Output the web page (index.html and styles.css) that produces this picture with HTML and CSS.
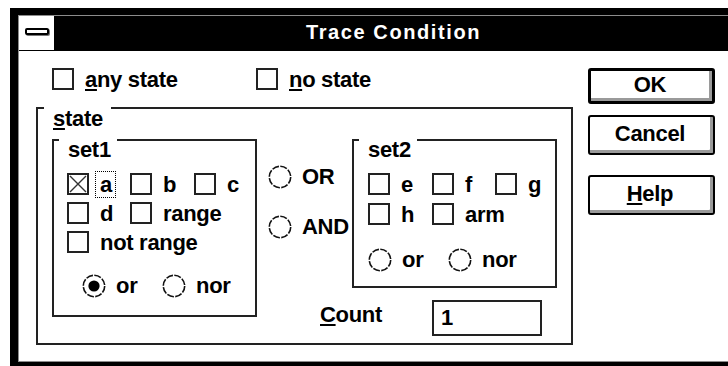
FILE: index.html
```html
<!DOCTYPE html>
<html lang="en">

<head>
    <meta charset="UTF-8">
    <meta name="viewport" content="width=device-width, initial-scale=1.0">
    <title>Trace Condition</title>
    <link rel="stylesheet" href="styles.css">
</head>

<body>
    <div class="window">
        <div class="frame">
            <div class="titlebar">
                <div class="sysmenu"><div class="sysmenu-bar"></div></div>
                <div class="title">Trace Condition</div>
            </div>

            <div class="content">
                <div class="main">
                    <div class="top-row">
                        <div class="check any"><span class="box"></span><span class="text"><u>a</u>ny state</span></div>
                        <div class="check"><span class="box"></span><span class="text"><u>n</u>o state</span></div>
                    </div>

                    <div class="group state">
                        <span class="group-label"><u>s</u>tate</span>
                        <div class="state-body">
                            <!-- set1 -->
                            <div class="group set1">
                                <span class="group-label">set1</span>
                                <div class="checks">
                                    <div class="check">
                                        <span class="box checked">
                                            <svg width="18" height="18" viewBox="0 0 18 18">
                                                <path d="M1 1 L17 17 M17 1 L1 17" stroke="#333" stroke-width="1.4" fill="none" />
                                            </svg>
                                        </span>
                                        <span class="text focus">a</span>
                                    </div>
                                    <div class="check"><span class="box"></span><span class="text">b</span></div>
                                    <div class="check"><span class="box"></span><span class="text">c</span></div>
                                    <div class="check"><span class="box"></span><span class="text">d</span></div>
                                    <div class="check wide"><span class="box"></span><span class="text">range</span></div>
                                    <div class="check full"><span class="box"></span><span class="text">not range</span></div>
                                </div>
                                <div class="radios">
                                    <div class="radio">
                                        <svg width="24" height="24" viewBox="0 0 24 24">
                                            <circle cx="12" cy="12" r="10.7" fill="#fff" stroke="#111" stroke-width="1.6" stroke-dasharray="7 1.4" />
                                            <circle cx="12" cy="12" r="5.6" fill="#000" />
                                        </svg>
                                        <span class="text">or</span>
                                    </div>
                                    <div class="radio">
                                        <svg width="24" height="24" viewBox="0 0 24 24">
                                            <circle cx="12" cy="12" r="10.7" fill="#fff" stroke="#111" stroke-width="1.6" stroke-dasharray="7 1.4" />
                                        </svg>
                                        <span class="text">nor</span>
                                    </div>
                                </div>
                            </div>

                            <!-- OR / AND -->
                            <div class="middle">
                                <div class="radio">
                                    <svg width="24" height="24" viewBox="0 0 24 24">
                                        <circle cx="12" cy="12" r="10.7" fill="#fff" stroke="#111" stroke-width="1.6" stroke-dasharray="7 1.4" />
                                    </svg>
                                    <span class="text">OR</span>
                                </div>
                                <div class="radio and">
                                    <svg width="24" height="24" viewBox="0 0 24 24">
                                        <circle cx="12" cy="12" r="10.7" fill="#fff" stroke="#111" stroke-width="1.6" stroke-dasharray="7 1.4" />
                                    </svg>
                                    <span class="text">AND</span>
                                </div>
                            </div>

                            <!-- set2 -->
                            <div class="group set2">
                                <span class="group-label">set2</span>
                                <div class="checks">
                                    <div class="check"><span class="box"></span><span class="text">e</span></div>
                                    <div class="check"><span class="box"></span><span class="text">f</span></div>
                                    <div class="check"><span class="box"></span><span class="text">g</span></div>
                                    <div class="check"><span class="box"></span><span class="text">h</span></div>
                                    <div class="check wide"><span class="box"></span><span class="text">arm</span></div>
                                </div>
                                <div class="radios">
                                    <div class="radio">
                                        <svg width="24" height="24" viewBox="0 0 24 24">
                                            <circle cx="12" cy="12" r="10.7" fill="#fff" stroke="#111" stroke-width="1.6" stroke-dasharray="7 1.4" />
                                        </svg>
                                        <span class="text">or</span>
                                    </div>
                                    <div class="radio">
                                        <svg width="24" height="24" viewBox="0 0 24 24">
                                            <circle cx="12" cy="12" r="10.7" fill="#fff" stroke="#111" stroke-width="1.6" stroke-dasharray="7 1.4" />
                                        </svg>
                                        <span class="text">nor</span>
                                    </div>
                                </div>
                            </div>

                            <div class="count-row">
                                <span class="count-label"><u>C</u>ount</span>
                                <span class="field">1</span>
                            </div>
                        </div>
                    </div>
                </div>

                <div class="buttons">
                    <div class="btn default">OK</div>
                    <div class="btn cancel">Cancel</div>
                    <div class="btn help"><span><u>H</u>elp</span></div>
                </div>
            </div>
        </div>
    </div>
</body>

</html>
```

FILE: styles.css
```css
* {
    box-sizing: border-box;
}

body {
    margin: 0;
    background: #fff;
    overflow: hidden;
    font-family: "Liberation Sans", Arial, sans-serif;
    font-weight: bold;
    font-size: 22px;
    letter-spacing: -0.3px;
    line-height: 22px;
    color: #000;
}

u {
    text-decoration-thickness: 2px;
    text-underline-offset: 2px;
}

/* window frame */
.window {
    width: 731px;
    margin: 8px 0 0 10px;
    border: 7px solid #000;
    border-left-width: 8px;
}

.frame {
    border: 1px solid #8c8c8c;
}

.titlebar {
    display: flex;
    height: 35px;
    background: #000;
}

.sysmenu {
    width: 35px;
    height: 34px;
    background: #fff;
    padding: 12px 0 0 6px;
}

.sysmenu-bar {
    width: 24px;
    height: 7px;
    border: 2px solid #000;
    border-radius: 2px;
    background: #fff;
    box-shadow: 1px 1px 0 #777;
}

.title {
    flex: 1;
    color: #fff;
    text-align: center;
    font-size: 20px;
    letter-spacing: 1.6px;
    line-height: 32px;
}

.content {
    display: flex;
    height: 310px;
    padding: 17px 0 0 17px;
}

.main {
    width: 537px;
}

/* checkboxes and radios */
.check,
.radio {
    display: flex;
    align-items: flex-start;
}

.box {
    width: 22px;
    height: 22px;
    border: 2px solid #222;
    margin-right: 11px;
    flex-shrink: 0;
}

.box svg {
    display: block;
}

.check .text {
    padding-top: 1px;
}

.focus {
    outline: 1px dotted #000;
    outline-offset: 1px;
    margin-left: -3px;
    padding: 1px 2px 0 3px;
}

.radio svg {
    display: block;
    margin-right: 10px;
    flex-shrink: 0;
}

.radio .text {
    padding-top: 1px;
}

.top-row {
    display: flex;
    padding-left: 16px;
    height: 23px;
}

.top-row .any {
    width: 204px;
}

/* group boxes */
.group {
    position: relative;
    border: 2px solid #222;
}

.group-label {
    position: absolute;
    top: -4px;
    left: 6px;
    background: #fff;
    padding: 3px 8px 0 9px;
}

.state {
    margin-top: 16px;
    height: 238px;
}

.state-body {
    display: grid;
    grid-template-columns: 205px 95px 205px;
    grid-template-rows: 149px auto;
    padding: 30px 0 0 14px;
}

.set1 {
    grid-row: 1 / 3;
    height: 178px;
    padding: 32px 0 0 13px;
}

.set1 .group-label,
.set2 .group-label {
    left: 5px;
    padding: 2px 6px 0 9px;
}

.checks {
    display: grid;
    grid-template-columns: 63px 64px auto;
    grid-auto-rows: 22px;
    row-gap: 7px;
}

.checks .full {
    grid-column: 1 / 4;
}

.radios {
    display: flex;
}

.radios .radio {
    width: 80px;
}

.set1 .radios {
    margin-top: 21px;
    padding-left: 15px;
}

.middle {
    padding: 26px 0 0 11px;
}

.middle .and {
    margin-top: 26px;
}

.set2 {
    height: 149px;
    padding: 32px 0 0 14px;
}

.set2 .checks {
    grid-template-columns: 64px 63px auto;
    row-gap: 8px;
}

.set2 .radios {
    margin-top: 23px;
    padding-left: 0;
}

.set2 .radios .radio {
    width: 80px;
}

.count-row {
    grid-column: 2 / 4;
    display: flex;
    margin-top: 12px;
    padding-left: 63px;
}

.count-label {
    width: 112px;
    padding-top: 4px;
}

.field {
    width: 110px;
    height: 36px;
    border: 2px solid #222;
    padding-left: 7px;
    line-height: 32px;
}

/* push buttons */
.buttons {
    width: 127px;
    margin-left: 15px;
    display: flex;
    flex-direction: column;
}

.btn {
    height: 38px;
    border: 2px solid #000;
    border-radius: 3px;
    background: #fff;
    box-shadow: inset -3px -3px 0 #9a9a9a;
    display: flex;
    align-items: center;
    justify-content: center;
    padding: 0 3px 2px 0;
}

.btn.default {
    height: 36px;
    border-width: 3px;
}

.btn.cancel {
    margin-top: 11px;
    height: 40px;
}

.btn.help {
    margin-top: 20px;
    height: 40px;
}
```
